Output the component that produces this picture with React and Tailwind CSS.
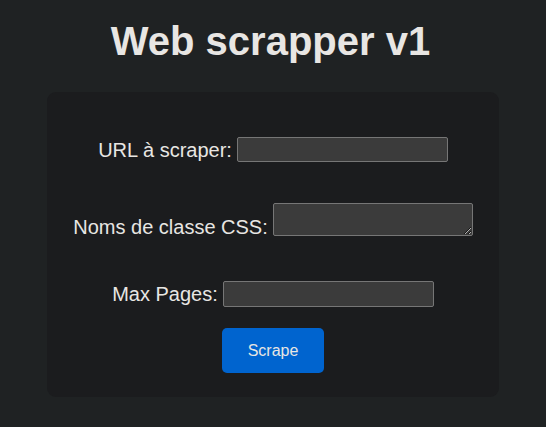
export default function App() {
  const font = { fontFamily: '"Liberation Sans", Arial, sans-serif' };
  return (
    <div className="min-h-[427px] w-full bg-[#1f2223] text-[#e8e6e3] overflow-hidden" style={font}>
      <h1 className="pt-[18px] pr-[5px] text-center text-[40px] font-bold leading-[46px]">Web scrapper v1</h1>
      <div className="mx-[47px] mt-[28px] h-[305px] rounded-[9px] bg-[#1b1c1e] pt-[45px]">
        <div className="flex h-[25px] items-center justify-center gap-[5px]">
          <label className="text-[20px] leading-[24px]">URL à scraper:</label>
          <input type="text" className="h-[25px] w-[211px] rounded-[2px] border border-[#767676] bg-[#3b3b3b] outline-none" />
        </div>
        <div className="mt-[41px] flex items-end justify-center gap-[5px]">
          <label className="text-[20px] leading-[24px] -mb-[3px]">Noms de classe CSS:</label>
          <textarea className="h-[33px] w-[200px] rounded-[2px] border border-[#767676] bg-[#3b3b3b] outline-none block" />
        </div>
        <div className="mt-[45px] flex h-[26px] items-center justify-center gap-[5px]">
          <label className="text-[20px] leading-[24px]">Max Pages:</label>
          <input type="text" className="h-[26px] w-[211px] rounded-[2px] border border-[#767676] bg-[#3b3b3b] outline-none" />
        </div>
        <div className="mt-[21px] flex justify-center">
          <button className="h-[45px] w-[102px] rounded-[5px] bg-[#0064cf] text-[16px] text-[#e8e6e3]">Scrape</button>
        </div>
      </div>
    </div>
  );
}
